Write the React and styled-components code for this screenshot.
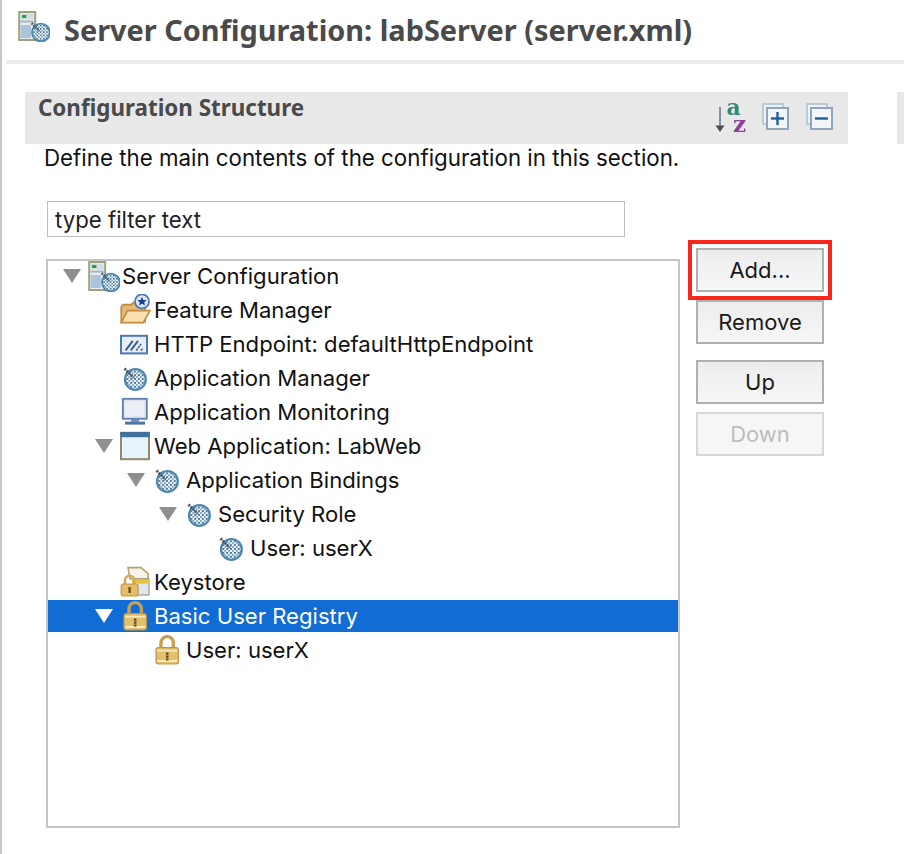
import React from "react";
import styled, { createGlobalStyle } from "styled-components";

const Global = createGlobalStyle`
  html, body { margin: 0; padding: 0; background: #fff; }
  body { width: 904px; height: 854px; overflow: hidden; }
  * { box-sizing: border-box; }
`;
const Page = styled.div`
  width: 904px; height: 854px; background: #fff; border-left: 2px solid #c8c8c4;
  font-family: Inter, "Liberation Sans", sans-serif; color: #111; overflow: hidden;
`;
const TitleBar = styled.header`
  margin-left: 4px; height: 64px; border-bottom: 4px solid #ececec; padding: 0 0 0 12px;
  display: flex; align-items: center; gap: 14px;
`;
const IconBox = styled.span`
  display: flex; width: 32px; height: 32px; flex: none; filter: blur(0.3px);
`;
const TitleIcon = styled(IconBox)`
  margin-top: -8px;
`;
const TitleText = styled.h1`
  margin: 0; font: 700 28.9px/40px "Noto Sans", sans-serif; color: #4a4a4a; white-space: nowrap;
`;
const HeaderRow = styled.div`
  display: flex; margin: 28px 0 0 23px; justify-content: space-between;
`;
const SectionHeader = styled.div`
  width: 823px; flex: none; height: 52px; background: #e8e8e8; padding: 1px 0 0 13px;
  display: flex; justify-content: space-between; border-radius: 2px 2px 0 0;
`;
const SectionTitle = styled.h2`
  margin: 0; font: 700 22.4px/30px "Noto Sans", sans-serif; color: #4a4a4a; white-space: nowrap;
`;
const Tools = styled.div`
  display: flex; gap: 10px; padding: 7px 12px 0 0; height: 44px;
`;
const ToolBtn = styled.span`
  display: flex; width: 34px; height: 34px; filter: blur(0.3px);
`;
const OtherTab = styled.div`
  width: 7px; height: 52px; background: #e8e8e8; flex: none;
`;
const Content = styled.div`
  padding-left: 43px;
`;
const Description = styled.p`
  margin: 0 0 0 -1px; height: 57px; font-size: 22.3px; line-height: 28px; color: #111; white-space: nowrap;
`;
const Filter = styled.div`
  width: 578px; height: 36px; margin-left: 2px; border: 1px solid #bdbdbd; padding: 0 7px;
  display: flex; align-items: center; font-size: 22.2px; color: #222; white-space: nowrap;
`;
const Body = styled.div`
  display: flex; margin-top: 22px; align-items: flex-start;
`;
const Tree = styled.div`
  width: 634px; height: 569px; margin-left: 1px; border: 2px solid #c4c4c4; overflow: hidden;
`;
const RowList = styled.div`
  margin-top: -2px;
`;
const Row = styled.div`
  height: 34px; display: flex; align-items: center; padding-left: ${p => 15 + p.$depth * 32}px;
  border-top: 1px solid transparent; border-bottom: 1px solid transparent; background-clip: padding-box;
  background-color: ${p => (p.$selected ? "#116cd6" : "transparent")};
  color: ${p => (p.$selected ? "#fff" : "#111")};
  font-size: 22.1px; white-space: nowrap;
`;
const RowLabel = styled.span`
  margin-top: -1px;
`;
const Arrow = styled.span`
  width: 18px; height: 14px; margin-right: 7px; flex: none;
  background: ${p => (p.$hidden ? "transparent" : p.$selected ? "#fff" : "#8f8f8f")};
  clip-path: polygon(0 0, 100% 0, 50% 100%);
`;
const NodeIcon = styled(IconBox)`
  margin-right: 2px;
`;
const Buttons = styled.div`
  display: flex; flex-direction: column; margin: -11px 0 0 16px; width: 128px;
`;
const Btn = styled.button`
  width: 128px; height: 44px; padding: 0; margin-top: ${p => p.$top}px;
  border: 2px solid ${p => (p.$disabled ? "#d6d6d6" : "#b0b0b0")};
  background: ${p => (p.$disabled ? "#f6f6f6" : "linear-gradient(#ececec, #f7f7f7)")};
  color: ${p => (p.$disabled ? "#bcbcbc" : "#1a1a1a")};
  font: 400 22px Inter, "Liberation Sans", sans-serif;
  ${p => p.$marked && "outline: 4px solid #f9261b; outline-offset: 4px;"}
`;

const Gear = ({ x = 0, y = 0, s = 1, uid }) => (
  <g transform={`translate(${x} ${y}) scale(${s})`}>
    <defs>
      <pattern id={uid} width="2.400" height="2.400" patternUnits="userSpaceOnUse">
        <rect width="2.400" height="2.400" fill="#f2f7fa" />
        <rect width="1.100" height="1.100" fill="#2c5f8c" />
        <rect x="1.200" y="1.200" width="1.100" height="1.100" fill="#6f9cbd" />
      </pattern>
    </defs>
    <circle cx="8" cy="8" r="7.200" fill="#4f86ad" />
    <circle cx="8" cy="8" r="5.800" fill={`url(#${uid})`} />
    <path d="M1.200 1.200L7 7" stroke="#4a5560" strokeWidth="1.800" strokeDasharray="1.300 .6" />
  </g>
);
const Svg = ({ children }) => <svg width="100%" height="100%" viewBox="0 0 16 16">{children}</svg>;
const ServerIcon = () => (
  <Svg>
    <rect x=".6" y="1" width="8" height="14" fill="#e6ecef" stroke="#9aa37e" />
    <rect x="1.400" y="1.800" width="6.400" height="3" fill="#d4dde4" />
    <rect x="2" y="2.500" width="2.200" height="1.500" fill="#1fa83a" />
    <rect x="1.400" y="5.300" width="6.400" height="1" fill="#a7b6c4" />
    <rect x="1.400" y="7.500" width="5" height="6.500" fill="#aac4dc" />
    <Gear x="6" y="5.800" s=".68" uid="gs" />
  </Svg>
);
const FolderIcon = () => (
  <Svg>
    <path d="M.6 14V6.500l1-1.200h4l1-1h2v2h4V14z" fill="#e6b878" stroke="#c08a3e" strokeWidth=".8" />
    <path d="M.6 14.300L3.800 8.300h11.200l-3.400 6z" fill="#fbdfae" stroke="#c48a3c" strokeWidth=".8" />
    <circle cx="11" cy="3.700" r="3.500" fill="#dfe9f6" stroke="#4f78b4" strokeWidth=".9" />
    <path d="M11 1.500l.7 1.500 1.600.1-1.200 1.100.4 1.600-1.500-.9-1.500.9.400-1.600-1.200-1.100 1.600-.1z" fill="#1f3f92" />
  </Svg>
);
const EndpointIcon = () => (
  <Svg>
    <rect x=".5" y="3.900" width="13" height="8.800" fill="#e6edf6" stroke="#4f78b0" />
    <path d="M2.800 11.200L6.400 6.400M5.400 11.200L9 6.400" stroke="#3b5f8f" strokeWidth="1" />
    <path d="M8.200 11.200L10.500 8M10.500 11.300l1-1.300" stroke="#3b5f8f" strokeWidth=".9" strokeDasharray="1 .5" />
  </Svg>
);
const MonitorIcon = () => (
  <Svg>
    <rect x="1.400" y="1.400" width="12" height="10" fill="#dde3ec" stroke="#5d7fb0" strokeWidth=".9" />
    <rect x="2.600" y="2.600" width="9.600" height="7.600" fill="#eceff5" />
    <rect x="5.500" y="11.500" width="4" height="1.400" fill="#6d8cb8" />
    <rect x="2.500" y="12.800" width="10" height="1.500" fill="#4f74a8" />
  </Svg>
);
const WindowIcon = () => (
  <Svg>
    <rect x=".5" y="1.400" width="14" height="13.200" fill="#e6f3fc" stroke="#8f8a68" />
    <rect x=".2" y="1" width="14.600" height="2.600" fill="#43719f" />
    <rect x="1.200" y="4" width="12.600" height="10" fill="#e8f4fd" />
  </Svg>
);
const WebIcon = ({ uid = "gw" }) => (
  <Svg>
    <Gear x="1.300" y="2.300" s=".8" uid={uid} />
  </Svg>
);
const KeystoreIcon = () => (
  <Svg>
    <path d="M4 .8h6.500l3.500 3v2.700H5z" fill="#f7f3e6" stroke="#b5a26e" strokeWidth=".8" />
    <rect x="7" y="6.500" width="7.500" height="8" fill="#dfe6ec" stroke="#9a9a88" strokeWidth=".6" />
    <path d="M6 7h8.500v1.800H6z" fill="#e8c23a" />
    <path d="M2.500 9.500V7.200a2.300 2.300 0 0 1 4.600 0v2.300" fill="none" stroke="#cdaa5e" strokeWidth="1.300" />
    <rect x=".6" y="9" width="8.400" height="6" rx="1" fill="#e6bd68" stroke="#c0954a" strokeWidth=".6" />
    <rect x="4.200" y="10.500" width="1.200" height="3" fill="#6a4f1f" />
  </Svg>
);
const LockIcon = () => (
  <Svg>
    <path d="M4.500 7.500V4.400a3.100 3.100 0 0 1 6.200 0v3.100" fill="none" stroke="#c4a056" strokeWidth="1.700" />
    <rect x="2" y="6.800" width="11.200" height="8.200" rx="1.200" fill="#e4bf6c" stroke="#bd9748" strokeWidth=".6" />
    <path d="M2.500 8.300h10.200M2.500 13.500h10.200" stroke="#f7e8bc" strokeWidth=".9" />
    <path d="M7.600 9.300v4" stroke="#5e4719" strokeWidth="1.300" strokeDasharray="1.100 .4" />
  </Svg>
);
const SortIcon = () => (
  <svg width="100%" height="100%" viewBox="0 0 34 34" overflow="visible">
    <path d="M6 7v19" stroke="#5d7386" strokeWidth="1.500" />
    <path d="M1.500 25.500h9L6 32z" fill="#4d4d4d" />
    <text x="12.500" y="15" fontFamily="DejaVu Serif, serif" fontWeight="700" fontSize="22" fill="#2f8a78">a</text>
    <text x="19" y="32" fontFamily="DejaVu Serif, serif" fontWeight="700" fontSize="23" fill="#8b3f97">z</text>
  </svg>
);
const CollapseExpand = ({ plus }) => (
  <svg width="100%" height="100%" viewBox="0 0 34 34">
    <rect x="5" y="4" width="20" height="20" fill="#eef3f8" stroke="#b7cbdb" strokeWidth="2" />
    <rect x="9" y="8" width="21" height="21" fill="#f3f6f9" stroke="#93a5b8" strokeWidth="2" />
    <path d="M13 18.500h13" stroke="#1f5f93" strokeWidth="2.400" />
    {plus && <path d="M19.500 12v13" stroke="#1f5f93" strokeWidth="2.400" />}
  </svg>
);

const rows = [
  { d: 0, open: 1, I: ServerIcon, t: "Server Configuration" },
  { d: 1, I: FolderIcon, t: "Feature Manager" },
  { d: 1, I: EndpointIcon, t: "HTTP Endpoint: defaultHttpEndpoint" },
  { d: 1, I: WebIcon, t: "Application Manager" },
  { d: 1, I: MonitorIcon, t: "Application Monitoring" },
  { d: 1, open: 1, I: WindowIcon, t: "Web Application: LabWeb" },
  { d: 2, open: 1, I: WebIcon, t: "Application Bindings" },
  { d: 3, open: 1, I: WebIcon, t: "Security Role" },
  { d: 4, I: WebIcon, t: "User: userX" },
  { d: 1, I: KeystoreIcon, t: "Keystore" },
  { d: 1, open: 1, sel: 1, I: LockIcon, t: "Basic User Registry" },
  { d: 2, I: LockIcon, t: "User: userX" },
];

export default function App() {
  return (
    <Page>
      <Global />
      <TitleBar>
        <TitleIcon><ServerIcon /></TitleIcon>
        <TitleText>Server Configuration: labServer (server.xml)</TitleText>
      </TitleBar>
      <HeaderRow>
        <SectionHeader>
          <SectionTitle>Configuration Structure</SectionTitle>
          <Tools>
            <ToolBtn><SortIcon /></ToolBtn>
            <ToolBtn><CollapseExpand plus /></ToolBtn>
            <ToolBtn><CollapseExpand /></ToolBtn>
          </Tools>
        </SectionHeader>
        <OtherTab />
      </HeaderRow>
      <Content>
        <Description>Define the main contents of the configuration in this section.</Description>
        <Filter>type filter text</Filter>
        <Body>
          <Tree>
            <RowList>
              {rows.map((r, i) => (
                <Row key={i} $depth={r.d} $selected={!!r.sel}>
                  <Arrow $hidden={!r.open} $selected={!!r.sel} />
                  <NodeIcon><r.I uid={`g${i}`} /></NodeIcon>
                  <RowLabel>{r.t}</RowLabel>
                </Row>
              ))}
            </RowList>
          </Tree>
          <Buttons>
            <Btn $marked $top={0}>Add...</Btn>
            <Btn $top={8}>Remove</Btn>
            <Btn $top={16}>Up</Btn>
            <Btn $top={8} $disabled>Down</Btn>
          </Buttons>
        </Body>
      </Content>
    </Page>
  );
}
